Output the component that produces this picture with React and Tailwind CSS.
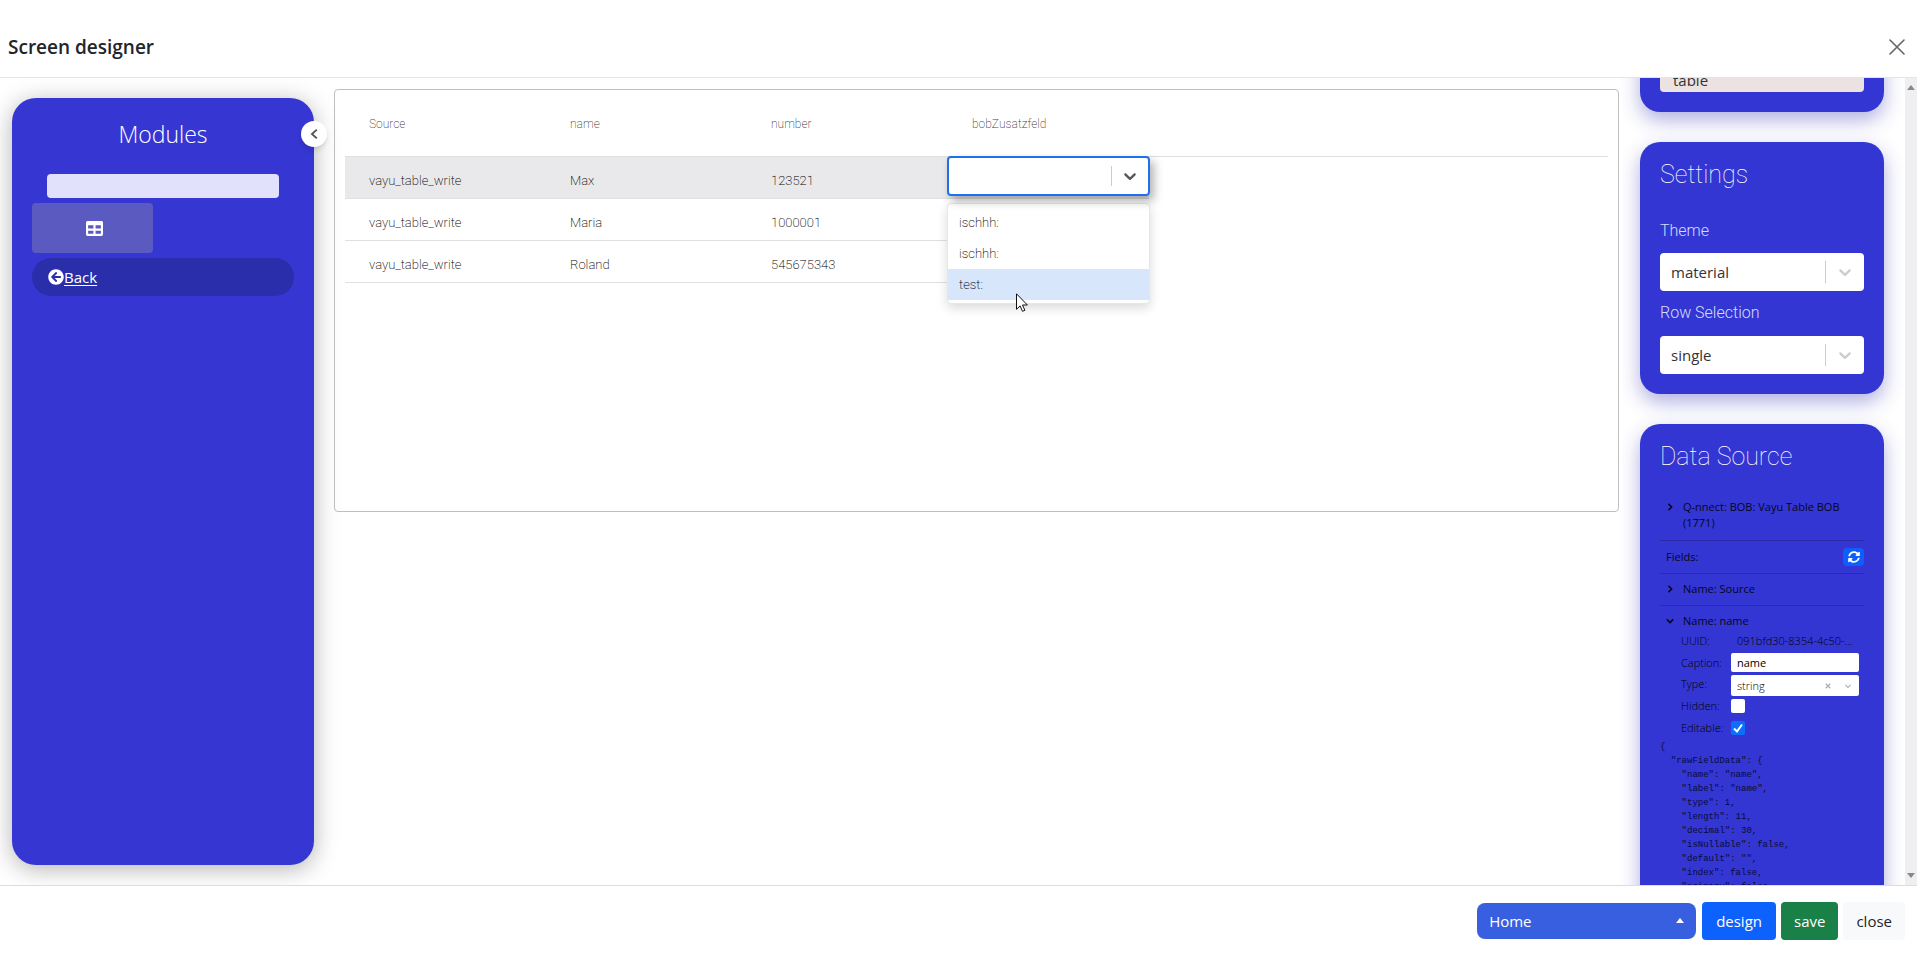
import { useState } from "react";
import { FaArrowCircleLeft, FaTable, FaSyncAlt } from "react-icons/fa";

const rows = [
  { source: "vayu_table_write", name: "Max", number: "123521" },
  { source: "vayu_table_write", name: "Maria", number: "1000001" },
  { source: "vayu_table_write", name: "Roland", number: "545675343" },
];

const options = ["ischhh:", "ischhh:", "test:"];

const rawFieldData = `{
  "rawFieldData": {
    "name": "name",
    "label": "name",
    "type": 1,
    "length": 11,
    "decimal": 30,
    "isNullable": false,
    "default": "",
    "index": false,
    "primary": false,`;

function ChevronDown({ className }) {
  return (
    <svg viewBox="0 0 20 20" fill="currentColor" className={className} aria-hidden="true">
      <path d="M4.516 7.548c0.436-0.446 1.043-0.481 1.576 0l3.908 3.747 3.908-3.747c0.533-0.481 1.141-0.446 1.574 0 0.436 0.445 0.408 1.197 0 1.615-0.406 0.418-4.695 4.502-4.695 4.502-0.217 0.223-0.502 0.335-0.787 0.335s-0.57-0.112-0.789-0.335c0 0-4.287-4.084-4.695-4.502s-0.436-1.17 0-1.615z" />
    </svg>
  );
}

function Angle({ open = false }) {
  return (
    <svg viewBox="0 0 10 10" className="w-2 h-2 mt-1 shrink-0" fill="none" stroke="currentColor" strokeWidth="2" aria-hidden="true">
      <path d={open ? "M1 3l4 4 4-4" : "M3 1l4 4-4 4"} />
    </svg>
  );
}

function SelectBox({ id, value, children }) {
  return (
    <div className="relative">
      <select
        id={id}
        defaultValue={value}
        className="block w-full h-[38px] appearance-none rounded bg-white pl-[11px] pr-12 text-[15px] text-[#333] focus:outline-none"
      >
        <option>{value}</option>
        {children}
      </select>
      <div className="absolute inset-y-2 right-0 flex items-center border-l border-[#ccc] px-[9px] text-[#ccc] pointer-events-none">
        <ChevronDown className="w-5 h-5" />
      </div>
    </div>
  );
}

function Sidebar() {
  return (
    <aside className="relative w-[302px] shrink-0 mt-5 mb-5 rounded-3xl bg-[#3636d2] px-5 pt-5 shadow-[0_4px_24px_rgba(0,0,0,0.3)]">
      <h2 className="text-center text-[23px] leading-8 font-light text-white">Modules</h2>
      <input
        type="text"
        aria-label="Search modules"
        className="block w-[232px] h-6 mt-6 mx-auto rounded bg-[#e2e1fc] px-2 text-sm focus:outline-none"
      />
      <button aria-label="Table" className="flex w-[121px] h-[50px] mt-[5px] items-center justify-center rounded bg-[#5a5ac0] pl-1 text-white">
        <FaTable className="w-[17px] h-[17px]" />
      </button>
      <a href="#back" className="flex h-[38px] mt-[5px] items-center rounded-full bg-[#2a2eab] px-4 text-[15px] text-white">
        <FaArrowCircleLeft className="w-4 h-4" />
        <span className="font-medium underline underline-offset-2">Back</span>
      </a>
      <button
        aria-label="Collapse"
        className="absolute top-[23px] -right-[13px] flex w-[26px] h-[26px] items-center justify-center rounded-full bg-white text-[#555] shadow-md"
      >
        <svg viewBox="0 0 10 14" className="w-2 h-3" fill="none" stroke="currentColor" strokeWidth="2.4">
          <path d="M8.500 1.500L2.500 7l6 5.500" />
        </svg>
      </button>
    </aside>
  );
}

function CellSelect() {
  const [selected, setSelected] = useState(2);

  return (
    <div className="absolute -left-px -top-px -right-px z-10">
      <div className="relative rounded shadow-[4px_5px_10px_rgba(0,0,0,0.3)]">
        <select
          aria-label="bobZusatzfeld"
          defaultValue=""
          className="block w-full h-10 appearance-none rounded border-2 border-[#1f6ff0] bg-white focus:outline-none"
        >
          <option value=""></option>
        </select>
        <div className="absolute inset-y-[10px] right-[2px] flex items-center border-l border-[#ccc] px-2 text-[#555] pointer-events-none">
          <ChevronDown className="w-5 h-5" />
        </div>
      </div>
      <ul role="listbox" aria-label="Options" className="mt-[7px] rounded border border-gray-200 bg-white py-[3px] shadow-[0_4px_11px_rgba(0,0,0,0.15)]">
        {options.map((option, i) => (
          <li
            key={i}
            role="option"
            aria-selected={i === selected}
            onMouseEnter={() => setSelected(i)}
            className={`h-[31px] px-[11px] leading-[31px] ${i === selected ? "bg-[#d8e6fc]" : ""}`}
          >
            {option}
          </li>
        ))}
      </ul>
      {/* pointer */}
      <svg viewBox="0 0 12 19" className="absolute left-[69px] top-[137px] w-3 h-[19px]" fill="white" stroke="#111" strokeWidth="1">
        <path d="M0.500 0.800v15.500l3.600-3.400 2.400 5.400 2.400-1-2.400-5.300h4.900z" />
      </svg>
    </div>
  );
}

function Canvas() {
  return (
    <main className="flex-1 min-w-0 h-[423px] mt-[11px] ml-5 rounded border border-[#bfbfbf] px-[10px]">
      <table className="w-full table-fixed border-collapse text-left font-[Roboto,sans-serif] text-[13px] font-extralight text-black">
        <thead>
          <tr className="h-[66px] border-b border-[#e0e0e2] text-xs text-black/80">
            <th className="w-[201px] px-6 pt-[2px] font-extralight">Source</th>
            <th className="w-[201px] px-6 pt-[2px] font-extralight">name</th>
            <th className="w-[201px] px-6 pt-[2px] font-extralight">number</th>
            <th className="w-[201px] px-6 pt-[2px] font-extralight">bobZusatzfeld</th>
            <td></td>
          </tr>
        </thead>
        <tbody>
          {rows.map((row, i) => (
            <tr key={i} className={i === 0 ? "h-[42px] bg-[#e9e9eb]" : "h-[42px]"}>
              <td className="border-b border-[#e0e0e2] px-6 pt-2">{row.source}</td>
              <td className="border-b border-[#e0e0e2] px-6 pt-2">{row.name}</td>
              <td className="border-b border-[#e0e0e2] px-6 pt-2">{row.number}</td>
              <td className="relative border-b border-[#e0e0e2]">{i === 0 && <CellSelect />}</td>
              <td className="bg-white"></td>
            </tr>
          ))}
        </tbody>
      </table>
    </main>
  );
}

function Card({ title, className = "", children }) {
  return (
    <section className={`rounded-[20px] bg-[#3336d2] px-5 shadow-[0_8px_20px_rgba(54,54,180,0.4)] ${className}`}>
      {title && <h2 className="pt-[17px] font-[Roboto,sans-serif] text-[25px] leading-8 font-thin text-white">{title}</h2>}
      {children}
    </section>
  );
}

function FieldDetails() {
  return (
    <div className="grid grid-cols-[50px_128px] items-center pl-[21px] text-[11px] leading-4 font-light text-black">
      <span className="h-6 leading-6">UUID:</span>
      <span className="px-[6px] truncate">091bfd30-8354-4c50-9d1e</span>
      <label htmlFor="caption">Caption:</label>
      <input id="caption" defaultValue="name" className="h-[19px] rounded-xs bg-white px-[6px] font-normal focus:outline-none" />
      <label htmlFor="type">Type:</label>
      <div className="relative mt-[3px]">
        <select id="type" className="block w-full h-[21px] appearance-none rounded-xs bg-white px-[6px] focus:outline-none">
          <option>string</option>
        </select>
        <div className="absolute inset-y-0 right-[6px] flex items-center gap-3 text-[#aaa] pointer-events-none">
          <svg viewBox="0 0 8 8" className="w-[6px] h-[6px]" stroke="currentColor" strokeWidth="1.500">
            <path d="M1 1l6 6M7 1l-6 6" />
          </svg>
          <ChevronDown className="w-[10px] h-[10px]" />
        </div>
      </div>
      <label htmlFor="hidden" className="h-5 leading-5">Hidden:</label>
      <input id="hidden" type="checkbox" className="w-[14px] h-[14px] appearance-none rounded-xs bg-white" />
      <label htmlFor="editable" className="h-6 leading-6">Editable:</label>
      <span className="relative w-[14px] h-[14px]">
        <input id="editable" type="checkbox" defaultChecked className="block w-[14px] h-[14px] appearance-none rounded-xs bg-[#0d6efd]" />
        <svg viewBox="0 0 14 14" className="absolute inset-0 pointer-events-none" fill="none" stroke="white" strokeWidth="2">
          <path d="M3 7.500l3 3 5-7" />
        </svg>
      </span>
    </div>
  );
}

function Properties() {
  return (
    <aside className="flex w-[298px] shrink-0 overflow-hidden">
      <div className="flex flex-1 flex-col gap-[30px] pl-[21px] pr-[21px]">
        <Card className="-mt-[30px] pt-5 pb-5 shrink-0">
          <select
            aria-label="Component"
            className="block w-full h-6 appearance-none rounded bg-[#ece2e2] px-[13px] text-[15px] text-[#333] focus:outline-none"
          >
            <option>table</option>
          </select>
        </Card>
        <Card title="Settings" className="pb-5 shrink-0">
          <div className="pt-7 font-[Roboto,sans-serif] text-base leading-6 font-light text-[#d8dcff]">
            <label htmlFor="theme">Theme</label>
          </div>
          <div className="pt-[10px]">
            <SelectBox id="theme" value="material" />
          </div>
          <div className="pt-[10px] font-[Roboto,sans-serif] text-base leading-6 font-light text-[#d8dcff]">
            <label htmlFor="rowSelection">Row Selection</label>
          </div>
          <div className="pt-[11px]">
            <SelectBox id="rowSelection" value="single" />
          </div>
        </Card>
        <Card title="Data Source" className="pb-10 shrink-0 text-[#05061f]">
          <div className="mt-[23px] text-[11px] leading-4">
            <div className="flex gap-[9px] border-b border-[#2a2aa8] pl-[6px] pt-[3px] pb-[9px]">
              <Angle />
              <span>Q-nnect: BOB: Vayu Table BOB (1771)</span>
            </div>
            <div className="flex h-[33px] items-center justify-between border-b border-[#2a2aa8] pl-[6px]">
              <span>Fields:</span>
              <button aria-label="Refresh" className="flex w-[21px] h-[18px] items-center justify-center rounded bg-[#0d5ffd] text-white">
                <FaSyncAlt className="w-3 h-3" />
              </button>
            </div>
            <div className="flex h-8 gap-[9px] border-b border-[#2a2aa8] pl-[6px] pt-[7px]">
              <Angle />
              <span>Name: Source</span>
            </div>
            <div className="flex h-[23px] gap-[9px] pl-[6px] pt-[7px]">
              <Angle open />
              <span>Name: name</span>
            </div>
          </div>
          <FieldDetails />
          <pre className="font-['Liberation_Mono',monospace] text-[9px] leading-[14px] text-[#0a0b40]">{rawFieldData}</pre>
        </Card>
      </div>
      <div className="flex w-3 flex-col justify-between items-center bg-[#efeff1] py-[7px] text-[#888]">
        <svg viewBox="0 0 8 5" className="w-2 h-[5px]" fill="currentColor"><path d="M0 5l4-5 4 5z" /></svg>
        <svg viewBox="0 0 8 5" className="w-2 h-[5px]" fill="currentColor"><path d="M0 0l4 5 4-5z" /></svg>
      </div>
    </aside>
  );
}

function App() {
  return (
    <div className="flex h-screen flex-col overflow-hidden bg-white font-['Open_Sans',sans-serif] text-[#212529]">
      <header className="flex items-center justify-between border-b border-[#e3e4e6] px-2 pt-8 pb-[15px]">
        <h1 className="text-[19px] leading-[30px] font-semibold">Screen designer</h1>
        <button aria-label="Close" className="p-1 text-[#666]">
          <svg viewBox="0 0 16 16" className="w-4 h-4" stroke="currentColor" strokeWidth="1.600" strokeLinecap="round">
            <path d="M1 1l14 14M15 1L1 15" />
          </svg>
        </button>
      </header>

      <div className="flex flex-1 min-h-0 overflow-hidden pl-3">
        <Sidebar />
        <Canvas />
        <Properties />
      </div>

      <footer className="flex h-[82px] shrink-0 items-start justify-end border-t border-[#dcdde0] pt-4 pr-3 text-[15px]">
        <div className="relative mr-[6px]">
          <select
            aria-label="Screen"
            className="block w-[219px] h-9 mt-px appearance-none rounded-lg bg-[#385fe0] px-3 font-medium text-white focus:outline-none"
          >
            <option>Home</option>
          </select>
          <svg viewBox="0 0 8 5" className="absolute right-3 top-4 w-2 h-[5px] pointer-events-none" fill="white">
            <path d="M0 5l4-5 4 5z" />
          </svg>
        </div>
        <button className="h-[38px] mr-[5px] rounded bg-[#0d62fd] px-[14px] font-medium text-white">design</button>
        <button className="h-[38px] mr-[5px] rounded bg-[#198048] px-[13px] font-medium text-white">save</button>
        <button className="h-[38px] rounded bg-[#f8f9fa] px-[13px]">close</button>
      </footer>
    </div>
  );
}

export default App;
